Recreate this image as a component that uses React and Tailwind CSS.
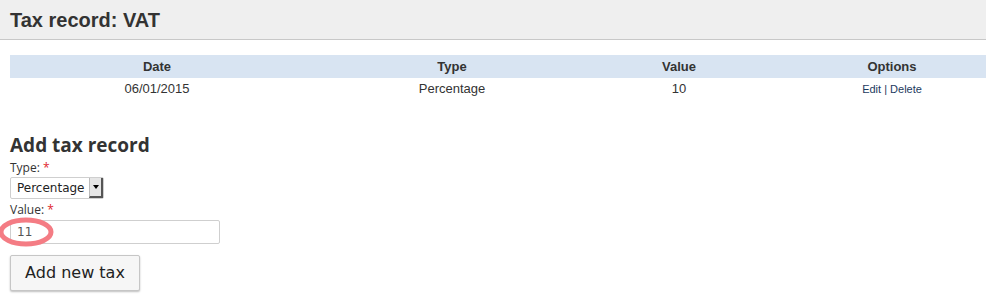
export default function App() {
  const rows = [{ date: '06/01/2015', type: 'Percentage', value: '10' }]

  return (
    <div className="w-[986px] h-[305px] overflow-hidden bg-white relative">
      <div className="h-[40px] bg-[#efefef] border-b border-[#c8c8c8] px-[10px] flex items-center">
        <h1 className="font-['Liberation_Sans',Arial,sans-serif] font-bold text-[20px] text-[#333] leading-none pt-[1px]">
          Tax record: VAT
        </h1>
      </div>

      <div className="pl-[10px] pt-[15px] font-['Liberation_Sans',Arial,sans-serif] text-[13px] text-[#333]">
        <div className="grid grid-cols-[294px_296px_158px_268px] w-[1016px] bg-[#d8e4f2] h-[23px] items-center font-bold text-center">
          <div>Date</div>
          <div>Type</div>
          <div>Value</div>
          <div>Options</div>
        </div>
        {rows.map((r) => (
          <div key={r.date} className="grid grid-cols-[294px_296px_158px_268px] w-[1016px] h-[22px] items-center text-center">
            <div>{r.date}</div>
            <div>{r.type}</div>
            <div>{r.value}</div>
            <div className="text-[11px] text-[#1c3a5e]">
              <a>Edit</a> | <a>Delete</a>
            </div>
          </div>
        ))}
      </div>

      <div className="px-[10px] pt-[34px] font-['Open_Sans',sans-serif] text-[#333]">
        <h2 className="font-bold text-[19px] leading-[22px]">Add tax record</h2>
        <div className="text-[12px] leading-[16px] mt-[4px]">
          Type: <span className="text-[#e0242b]">*</span>
        </div>
        <div className="mt-[1px] w-[94px] h-[22px] border border-[#cfcfcf] rounded-[2px] flex items-center bg-white">
          <span className="flex-1 pl-[6px] text-[12px] font-['DejaVu_Sans',sans-serif] text-[#222]">Percentage</span>
          <span className="w-[14px] h-[20px] bg-[#e6e6e6] border-l border-[#bbb] border-r-2 border-b-2 border-r-[#555] border-b-[#555] flex items-center justify-center">
            <span className="block w-0 h-0 border-l-[3px] border-r-[3px] border-t-[4px] border-l-transparent border-r-transparent border-t-black"></span>
          </span>
        </div>
        <div className="text-[12px] leading-[16px] mt-[3px]">
          Value: <span className="text-[#e0242b]">*</span>
        </div>
        <div className="relative mt-[2px] w-[210px] h-[24px] border border-[#cfcfcf] rounded-[2px] flex items-center">
          <span className="pl-[6px] text-[12px] font-['DejaVu_Sans',sans-serif] text-[#555]">11</span>
          <svg className="absolute left-[-15px] top-[-7px]" width="60" height="36" viewBox="0 0 60 36">
            <ellipse cx="30" cy="18" rx="25" ry="12" fill="none" stroke="#f47c84" strokeWidth="5" />
          </svg>
        </div>
        <button className="mt-[11px] w-[130px] h-[36px] bg-[#f6f6f6] border border-[#c6c6c6] rounded-[2px] shadow-[0_1px_2px_rgba(0,0,0,0.25)] text-[16px] font-['DejaVu_Sans',sans-serif] text-[#222]">
          Add new tax
        </button>
      </div>
    </div>
  )
}
